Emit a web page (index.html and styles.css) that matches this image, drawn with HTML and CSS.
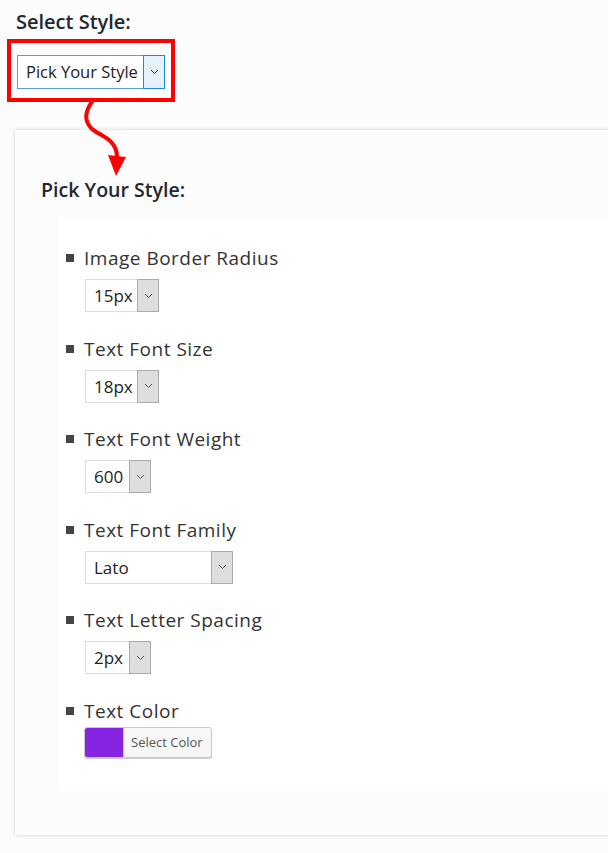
FILE: index.html
```html
<!DOCTYPE html>
<html>
<head>
<meta charset="utf-8">
<link rel="stylesheet" href="styles.css">
</head>
<body>
<div class="page">
  <h2 class="title">Select Style:</h2>
  <div class="picker-wrap">
    <div class="highlight">
      <div class="select select-main">
        <span class="value">Pick Your Style</span>
        <span class="btn btn-blue"><svg width="9" height="6" viewBox="0 0 9 6"><path d="M1 1 L4.5 4.5 L8 1" fill="none" stroke="#333" stroke-width="1"/></svg></span>
      </div>
    </div>
    <svg class="arrow" width="60" height="90" viewBox="0 0 60 90">
      <path d="M18 0 C11 10 8 19 16 28 C24 36 41 38 42 56" fill="none" stroke="#f00" stroke-width="4" stroke-linecap="round"/>
      <polygon points="33,55 51,57 41,76" fill="#f00"/>
    </svg>
  </div>
  <div class="panel">
    <h3 class="panel-title">Pick Your Style:</h3>
    <ul class="opts">
      <li class="opt">
        <div class="label">Image Border Radius</div>
        <div class="select w74"><span class="value">15px</span><span class="btn"><svg width="9" height="6" viewBox="0 0 9 6"><path d="M1 1 L4.5 4.5 L8 1" fill="none" stroke="#555" stroke-width="1"/></svg></span></div>
      </li>
      <li class="opt">
        <div class="label">Text Font Size</div>
        <div class="select w74"><span class="value">18px</span><span class="btn"><svg width="9" height="6" viewBox="0 0 9 6"><path d="M1 1 L4.5 4.5 L8 1" fill="none" stroke="#555" stroke-width="1"/></svg></span></div>
      </li>
      <li class="opt">
        <div class="label">Text Font Weight</div>
        <div class="select w66"><span class="value">600</span><span class="btn"><svg width="9" height="6" viewBox="0 0 9 6"><path d="M1 1 L4.5 4.5 L8 1" fill="none" stroke="#555" stroke-width="1"/></svg></span></div>
      </li>
      <li class="opt">
        <div class="label">Text Font Family</div>
        <div class="select w148"><span class="value">Lato</span><span class="btn"><svg width="9" height="6" viewBox="0 0 9 6"><path d="M1 1 L4.5 4.5 L8 1" fill="none" stroke="#555" stroke-width="1"/></svg></span></div>
      </li>
      <li class="opt">
        <div class="label">Text Letter Spacing</div>
        <div class="select w66"><span class="value">2px</span><span class="btn"><svg width="9" height="6" viewBox="0 0 9 6"><path d="M1 1 L4.5 4.5 L8 1" fill="none" stroke="#555" stroke-width="1"/></svg></span></div>
      </li>
      <li class="opt last">
        <div class="label">Text Color</div>
        <div class="color-btn"><span class="swatch"></span><span class="color-text">Select Color</span></div>
      </li>
    </ul>
  </div>
</div>
</body>
</html>
```
FILE: styles.css
```css
html, body {
  margin: 0;
  padding: 0;
  background: #fcfcfc;
  overflow: hidden;
}
.page {
  font-family: "Open Sans", "Noto Sans", sans-serif;
  color: #23282d;
  width: 608px;
  height: 853px;
}
.title {
  margin: 0;
  padding: 8px 0 0 16px;
  font-size: 20px;
  font-weight: 600;
  line-height: 28px;
}
.picker-wrap {
  position: relative;
  margin-top: 3px;
}
.highlight {
  display: inline-block;
  margin-left: 7px;
  border: 4px solid #f00;
  padding: 12px 6px 9px 6px;
}
.select {
  display: flex;
  align-items: stretch;
  box-sizing: border-box;
  height: 33px;
  background: #fff;
  border: 1px solid #ddd;
}
.select .value {
  flex: 1;
  padding-left: 8px;
  font-size: 17px;
  line-height: 31px;
  color: #222;
  white-space: nowrap;
}
.select .btn {
  width: 20px;
  display: flex;
  align-items: center;
  justify-content: center;
  background: #dedede;
  border: 1px solid #aaa;
  margin: -1px -1px -1px 0;
}
.select-main {
  width: 148px;
  height: 34px;
  border-color: #5aa0dc;
}
.select-main .value {
  font-size: 16.5px;
  line-height: 32px;
}
.select-main .btn {
  background: #e5f1fb;
  border-color: #1e86dc;
}
.arrow {
  position: absolute;
  left: 75px;
  top: 61px;
}
.panel {
  margin: 28px -20px 0 15px;
  background: #fcfcfc;
  box-shadow: 0 0 4px rgba(0, 0, 0, 0.18);
  padding: 1px 0 44px 0;
}
.panel-title {
  margin: 0;
  padding: 45px 0 0 26px;
  font-size: 19.6px;
  font-weight: 600;
  line-height: 28px;
  height: 44px;
}
.opts {
  list-style: none;
  margin: 0 0 0 43px;
  padding: 26px 0 29px 0;
  background: #fff;
}
.opt {
  margin-bottom: 24.6px;
  padding-left: 26px;
}
.opt.last {
  margin-bottom: 0;
}
.label {
  position: relative;
  font-size: 19px;
  line-height: 24px;
  color: #333;
  letter-spacing: 0.5px;
}
.label::before {
  content: "";
  position: absolute;
  left: -18px;
  top: 8px;
  width: 8px;
  height: 8px;
  background: #444;
}
.opt .select {
  margin-top: 9px;
  margin-left: 1px;
}
.w74 { width: 74px; }
.w66 { width: 66px; }
.w148 { width: 148px; }
.color-btn {
  display: inline-flex;
  box-sizing: border-box;
  height: 31px;
  margin-top: 4px;
  border: 1px solid #c9c9c9;
  border-radius: 3px;
  background: #f7f7f7;
  box-shadow: 0 1px 0 #ccc;
  overflow: hidden;
}
.swatch {
  width: 38px;
  background: #8724e4;
  border-right: 1px solid #c9c9c9;
}
.color-text {
  padding: 0 8px 0 7px;
  font-size: 13px;
  line-height: 29px;
  color: #555;
}
```
